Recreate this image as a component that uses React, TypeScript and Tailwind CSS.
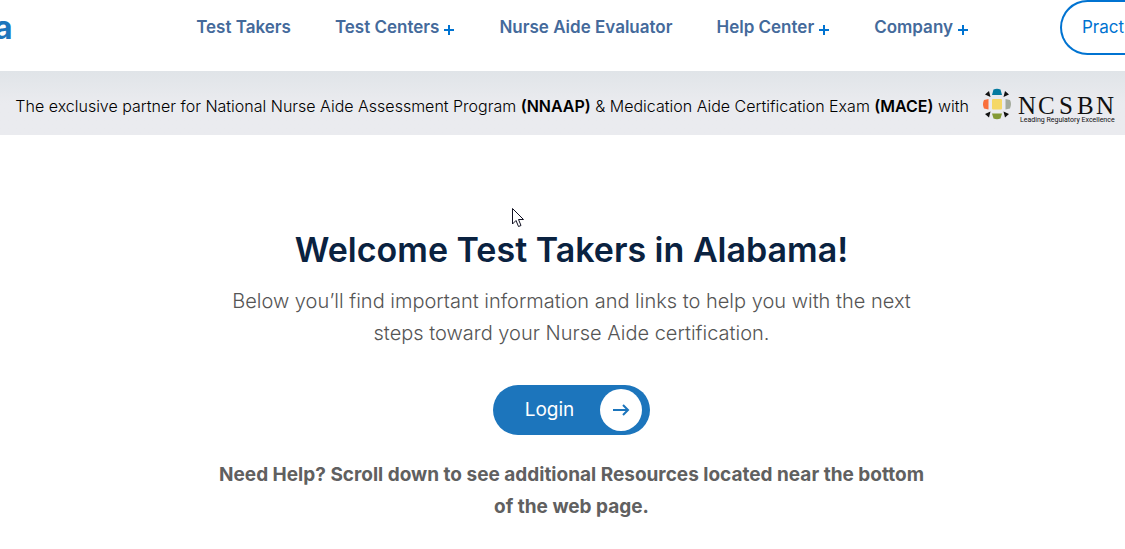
import React from 'react';

type NavItem = {
  label: string;
  hasMenu?: boolean;
};

const navItems: NavItem[] = [
  { label: 'Test Takers' },
  { label: 'Test Centers', hasMenu: true },
  { label: 'Nurse Aide Evaluator' },
  { label: 'Help Center', hasMenu: true },
  { label: 'Company', hasMenu: true },
];

const Plus = () => (
  <svg className="mt-1 ml-1 h-3 w-3 shrink-0" viewBox="0 0 12 12" aria-hidden="true">
    <path d="M6 1v10M1 6h10" stroke="#0073d1" strokeWidth="2" />
  </svg>
);

const Header = () => (
  <header className="flex h-[71px] items-start overflow-hidden bg-white">
    <a href="#home" className="-ml-1.5 pt-2 text-[32px] leading-10 font-bold text-[#1c75bc]">
      a
    </a>
    <nav className="mr-[91px] ml-auto flex h-14 items-center gap-11">
      {navItems.map(item => (
        <a
          key={item.label}
          href="#menu"
          className="flex items-center text-[17px] font-semibold whitespace-nowrap text-[#446a9b]"
        >
          {item.label}
          {item.hasMenu && <Plus />}
        </a>
      ))}
    </nav>
    <button
      type="button"
      className="h-[55px] w-[65px] shrink-0 rounded-l-full border-2 border-r-0 border-[#0073d1] pl-5 text-left text-[17px] text-[#0073d1]"
    >
      Pract
    </button>
  </header>
);

const NcsbnLogo = () => (
  <svg className="h-9 w-[132px] shrink-0" viewBox="0 0 132 36" role="img" aria-label="NCSBN">
    <path d="M10.500 1.500q3.500-1.500 7 0l1.500 5.500h-10z" fill="#057a9f" />
    <path d="M10.500 30.500q3.500 1.500 7 0l1.500-5h-10z" fill="#849a36" />
    <path d="M1 12q-2 4 0 8.500l4.500 1v-10.500z" fill="#f96f3c" />
    <path d="M27 12q2 4 0 8.500l-4.500 1v-10.500z" fill="#a3aa9c" />
    <rect x="9" y="11" width="10" height="10.500" rx="1" fill="#f5d866" />
    <path
      d="M2 6.500L6 3L7.500 9zM26 6.500L22 3L20.500 9zM2 26L6 29.500L7.500 23.500zM26 26L22 29.500L20.500 23.500z"
      fill="#111"
    />
    <text x="35 55 76 94 113" y="26" fontFamily="Liberation Serif, serif" fontSize="25" fill="#111">
      NCSBN
    </text>
    <text x="37" y="34" fontFamily="Roboto, sans-serif" fontSize="7" fill="#111">
      Leading Regulatory Excellence
    </text>
  </svg>
);

const PartnerBanner = () => (
  <section className="flex h-16 items-center justify-end gap-[14px] bg-linear-to-b from-[#e0e4e8] to-[#eaebef] to-50% pt-1.5 pr-[10px] whitespace-nowrap">
    <p className="text-base font-light text-black">
      The exclusive partner for National Nurse Aide Assessment Program{' '}
      <strong className="font-semibold">(NNAAP)</strong> &amp; Medication Aide Certification Exam{' '}
      <strong className="font-semibold">(MACE)</strong> with
    </p>
    <NcsbnLogo />
  </section>
);

const Cursor = () => (
  <svg className="absolute top-[207px] left-[511px] h-[21px] w-[14px]" viewBox="0 0 14 21" aria-hidden="true">
    <path
      d="M1.500 1.500v15.500l3.500-3.500 2.500 6 2.500-1-2.500-6h5z"
      fill="#fff"
      stroke="#112"
      strokeWidth="1"
    />
  </svg>
);

export default function App() {
  return (
    <div className="relative overflow-hidden bg-white font-['Inter','Open_Sans',sans-serif]">
      <Header />
      <PartnerBanner />
      <main className="mx-auto flex max-w-3xl flex-col items-center pt-[92px] pl-[18px] text-center">
        <h1 className="text-[34px] leading-[46px] font-semibold text-[#0a2240]">
          Welcome Test Takers in Alabama!
        </h1>
        <p className="mt-3 text-xl leading-8 font-light text-[#555]">
          Below you’ll find important information and links to help you with the next
          <br />
          steps toward your Nurse Aide certification.
        </p>
        <a
          href="#login"
          className="mt-9 flex h-[50px] items-center gap-[26px] rounded-full bg-[#1c75bc] pr-2 pl-8 text-[19px] text-white"
        >
          Login
          <span className="flex h-[42px] w-[42px] items-center justify-center rounded-full bg-white">
            <svg className="h-[18px] w-[18px]" viewBox="0 0 18 18" fill="none" aria-hidden="true">
              <path d="M1 9h15M11 4l5 5-5 5" stroke="#1c75bc" strokeWidth="2" />
            </svg>
          </span>
        </a>
        <p className="mt-6 text-[19px] leading-8 font-bold text-[#606060]">
          Need Help? Scroll down to see additional Resources located near the bottom
          <br />
          of the web page.
        </p>
      </main>
      <Cursor />
    </div>
  );
}
